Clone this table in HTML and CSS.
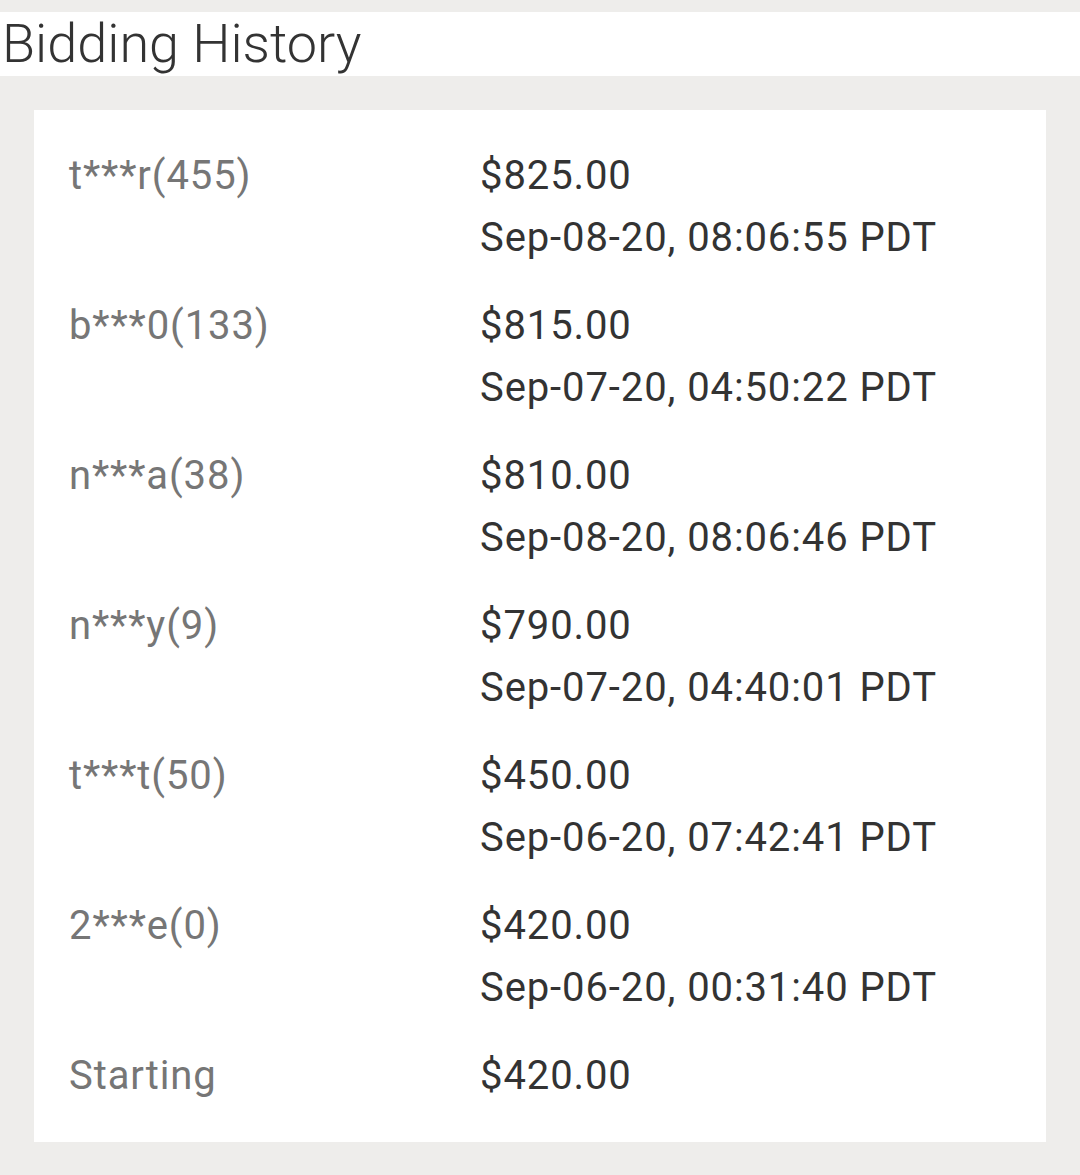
FILE: index.html
```html
<!DOCTYPE html>
<html>
<head>
<meta charset="utf-8">
<link rel="stylesheet" href="styles.css">
</head>
<body>
<div class="page">
  <header class="header"><h1 class="title">Bidding History</h1></header>
  <section class="card">
    <div class="row"><div class="bidder">t***r(455)</div><div class="info"><div class="amount">$825.00</div><div class="time">Sep-08-20, 08:06:55 PDT</div></div></div>
    <div class="row"><div class="bidder">b***0(133)</div><div class="info"><div class="amount">$815.00</div><div class="time">Sep-07-20, 04:50:22 PDT</div></div></div>
    <div class="row"><div class="bidder">n***a(38)</div><div class="info"><div class="amount">$810.00</div><div class="time">Sep-08-20, 08:06:46 PDT</div></div></div>
    <div class="row"><div class="bidder">n***y(9)</div><div class="info"><div class="amount">$790.00</div><div class="time">Sep-07-20, 04:40:01 PDT</div></div></div>
    <div class="row"><div class="bidder">t***t(50)</div><div class="info"><div class="amount">$450.00</div><div class="time">Sep-06-20, 07:42:41 PDT</div></div></div>
    <div class="row"><div class="bidder">2***e(0)</div><div class="info"><div class="amount">$420.00</div><div class="time">Sep-06-20, 00:31:40 PDT</div></div></div>
    <div class="row"><div class="bidder">Starting</div><div class="info"><div class="amount">$420.00</div></div></div>
  </section>
</div>
</body>
</html>
```
FILE: styles.css
```css
html, body {
  margin: 0;
  padding: 0;
  background: #eeedeb;
}
body {
  font-family: Roboto, "Liberation Sans", sans-serif;
  width: 1080px;
  height: 1175px;
  overflow: hidden;
}
.page {
  padding-top: 12px;
}
.header {
  background: #ffffff;
  height: 64px;
  display: flex;
  align-items: center;
}
.title {
  margin: 0 0 0 2px;
  font-weight: 300;
  font-size: 54px;
  line-height: 64px;
  color: #333333;
}
.card {
  background: #ffffff;
  margin: 34px 34px 0 34px;
  padding: 22px 35px 22px 35px;
  display: flex;
  flex-direction: column;
}
.row {
  display: flex;
  padding: 13px 0;
  font-size: 40px;
  letter-spacing: 0.9px;
  line-height: 62px;
}
.bidder {
  width: 411px;
  color: #767676;
}
.info {
  color: #333333;
}
```
